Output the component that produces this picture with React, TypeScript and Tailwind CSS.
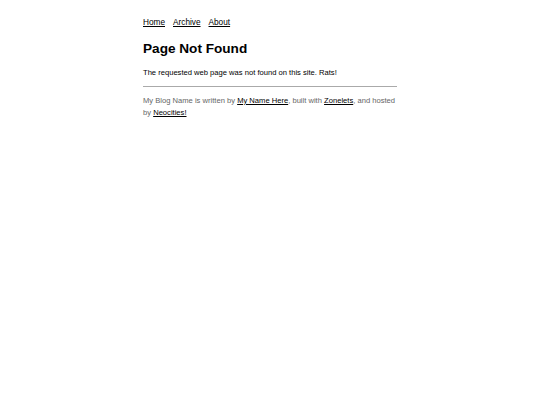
import React from "react";

const links = ["Home", "Archive", "About"];

export default function App() {
  return (
    <div className="min-h-[405px] bg-white font-['Liberation_Sans',Arial,sans-serif] text-black">
      <div className="mx-auto w-[254px] pt-[17px]">
        <nav className="flex gap-[8px] text-[8.25px] leading-[12px]">
          {links.map((l) => (
            <a key={l} href="#" className="underline">
              {l}
            </a>
          ))}
        </nav>
        <h1 className="mt-[11px] text-[13.6px] font-bold leading-[18px]">
          Page Not Found
        </h1>
        <p className="mt-[9px] text-[7.6px] leading-[12px]">
          The requested web page was not found on this site. Rats!
        </p>
        <hr className="mt-[7px] border-t border-[#aaaaaa]" />
        <p className="mt-[8px] text-[7.6px] leading-[12px] text-[#666666]">
          My Blog Name is written by{" "}
          <a href="#" className="text-black underline">
            My Name Here
          </a>
          , built with{" "}
          <a href="#" className="text-black underline">
            Zonelets
          </a>
          , and hosted by{" "}
          <a href="#" className="text-black underline">
            Neocities!
          </a>
        </p>
      </div>
    </div>
  );
}
